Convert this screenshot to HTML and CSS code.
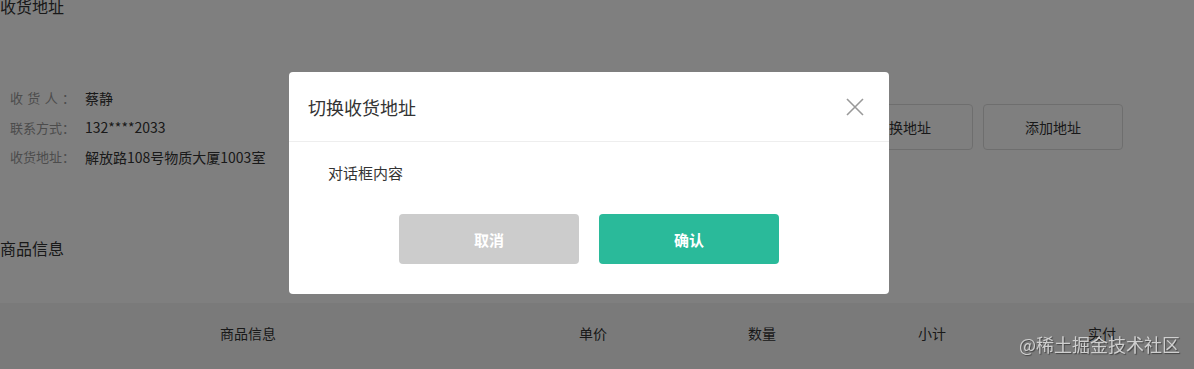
FILE: index.html
```html
<!DOCTYPE html>
<html lang="zh-CN">
<head>
  <meta charset="UTF-8" />
  <meta name="viewport" content="width=device-width, initial-scale=1.0"/>
  <title>确认订单</title>
  <link rel="stylesheet" href="styles.css">
</head>
<body>

  <div class="page">
    <h2 class="section-title first">收货地址</h2>

    <div class="address">
      <div class="address-info">
        <div class="row"><span class="label">收货人：</span><span class="value">蔡静</span></div>
        <div class="row"><span class="label">联系方式：</span><span class="value">132****2033</span></div>
        <div class="row"><span class="label">收货地址：</span><span class="value">解放路108号物质大厦1003室</span></div>
      </div>
      <div class="address-actions">
        <button class="plain-btn">切换地址</button>
        <button class="plain-btn">添加地址</button>
      </div>
    </div>

    <h2 class="section-title">商品信息</h2>

    <div class="goods-head">
      <div>商品信息</div>
      <div>单价</div>
      <div>数量</div>
      <div>小计</div>
      <div>实付</div>
    </div>
  </div>

  <div class="mask">
    <div class="dialog">
      <div class="dialog-header">
        <span class="dialog-title">切换收货地址</span>
        <svg class="dialog-close" width="18" height="18" viewBox="0 0 18 18">
          <path d="M1 1 L17 17 M17 1 L1 17" stroke="#999" stroke-width="1.6" fill="none"/>
        </svg>
      </div>
      <div class="dialog-body">对话框内容</div>
      <div class="dialog-footer">
        <button class="btn btn-gray">取消</button>
        <button class="btn btn-primary">确认</button>
      </div>
    </div>
  </div>

  <div class="watermark">@稀土掘金技术社区</div>

</body>
</html>
```

FILE: styles.css
```css
body {
  margin: 0;
  background: #fff;
  color: #333;
  font-family: "Noto Sans CJK SC", "Liberation Sans", sans-serif;
  overflow: hidden;
}

.page {
  margin-top: -6px;
}

.section-title {
  margin: 0;
  font-size: 16px;
  font-weight: normal;
  line-height: 24px;
  color: #333;
}

.address {
  display: flex;
  align-items: center;
  justify-content: space-between;
  margin-top: 65px;
  margin-bottom: 64px;
  padding-left: 10px;
  padding-right: 71px;
}

.row {
  display: flex;
  align-items: center;
  height: 29.5px;
}

.label {
  flex-shrink: 0;
  width: 65px;
  margin-right: 10px;
  font-size: 13px;
  white-space: nowrap;
  color: #999;
  text-align-last: justify;
}

.value {
  font-size: 14px;
  white-space: nowrap;
  color: #333;
}

.address-actions {
  display: flex;
  gap: 10px;
}

.plain-btn {
  width: 140px;
  height: 46px;
  background: #fff;
  border: 1px solid #ddd;
  border-radius: 4px;
  font-family: inherit;
  font-size: 14px;
  color: #333;
}

.goods-head {
  display: grid;
  grid-template-columns: 496px 194px 144px 196px 144px;
  margin-top: 43px;
  height: 80px;
  align-items: start;
  line-height: 60px;
  background: #f5f5f5;
  font-size: 14px;
  text-align: center;
  color: #333;
}

.mask {
  position: fixed;
  inset: 0;
  background: rgba(0, 0, 0, 0.5);
  display: flex;
  align-items: center;
  justify-content: center;
  padding-right: 16px;
  padding-bottom: 3px;
}

.dialog {
  width: 600px;
  height: 222px;
  background: #fff;
  border-radius: 4px;
  box-sizing: border-box;
}

.dialog-header {
  display: flex;
  align-items: center;
  justify-content: space-between;
  height: 69px;
  padding: 0 25px 0 19px;
  border-bottom: 1px solid #eee;
}

.dialog-title {
  font-size: 18px;
  color: #333;
}

.dialog-body {
  padding: 19px 39px 0;
  font-size: 15px;
  line-height: 24px;
  color: #333;
}

.dialog-footer {
  display: flex;
  justify-content: center;
  gap: 20px;
  margin-top: 29px;
}

.btn {
  width: 180px;
  height: 50px;
  border: none;
  border-radius: 4px;
  font-family: inherit;
  font-size: 15px;
  font-weight: bold;
  color: #fff;
}

.btn-gray {
  background: #ccc;
}

.btn-primary {
  background: #2aba9a;
}

.watermark {
  position: fixed;
  right: 14px;
  bottom: 12px;
  font-size: 18px;
  color: #cfcfcf;
  text-shadow: 1px 1px 1px rgba(0, 0, 0, 0.45);
}
```
